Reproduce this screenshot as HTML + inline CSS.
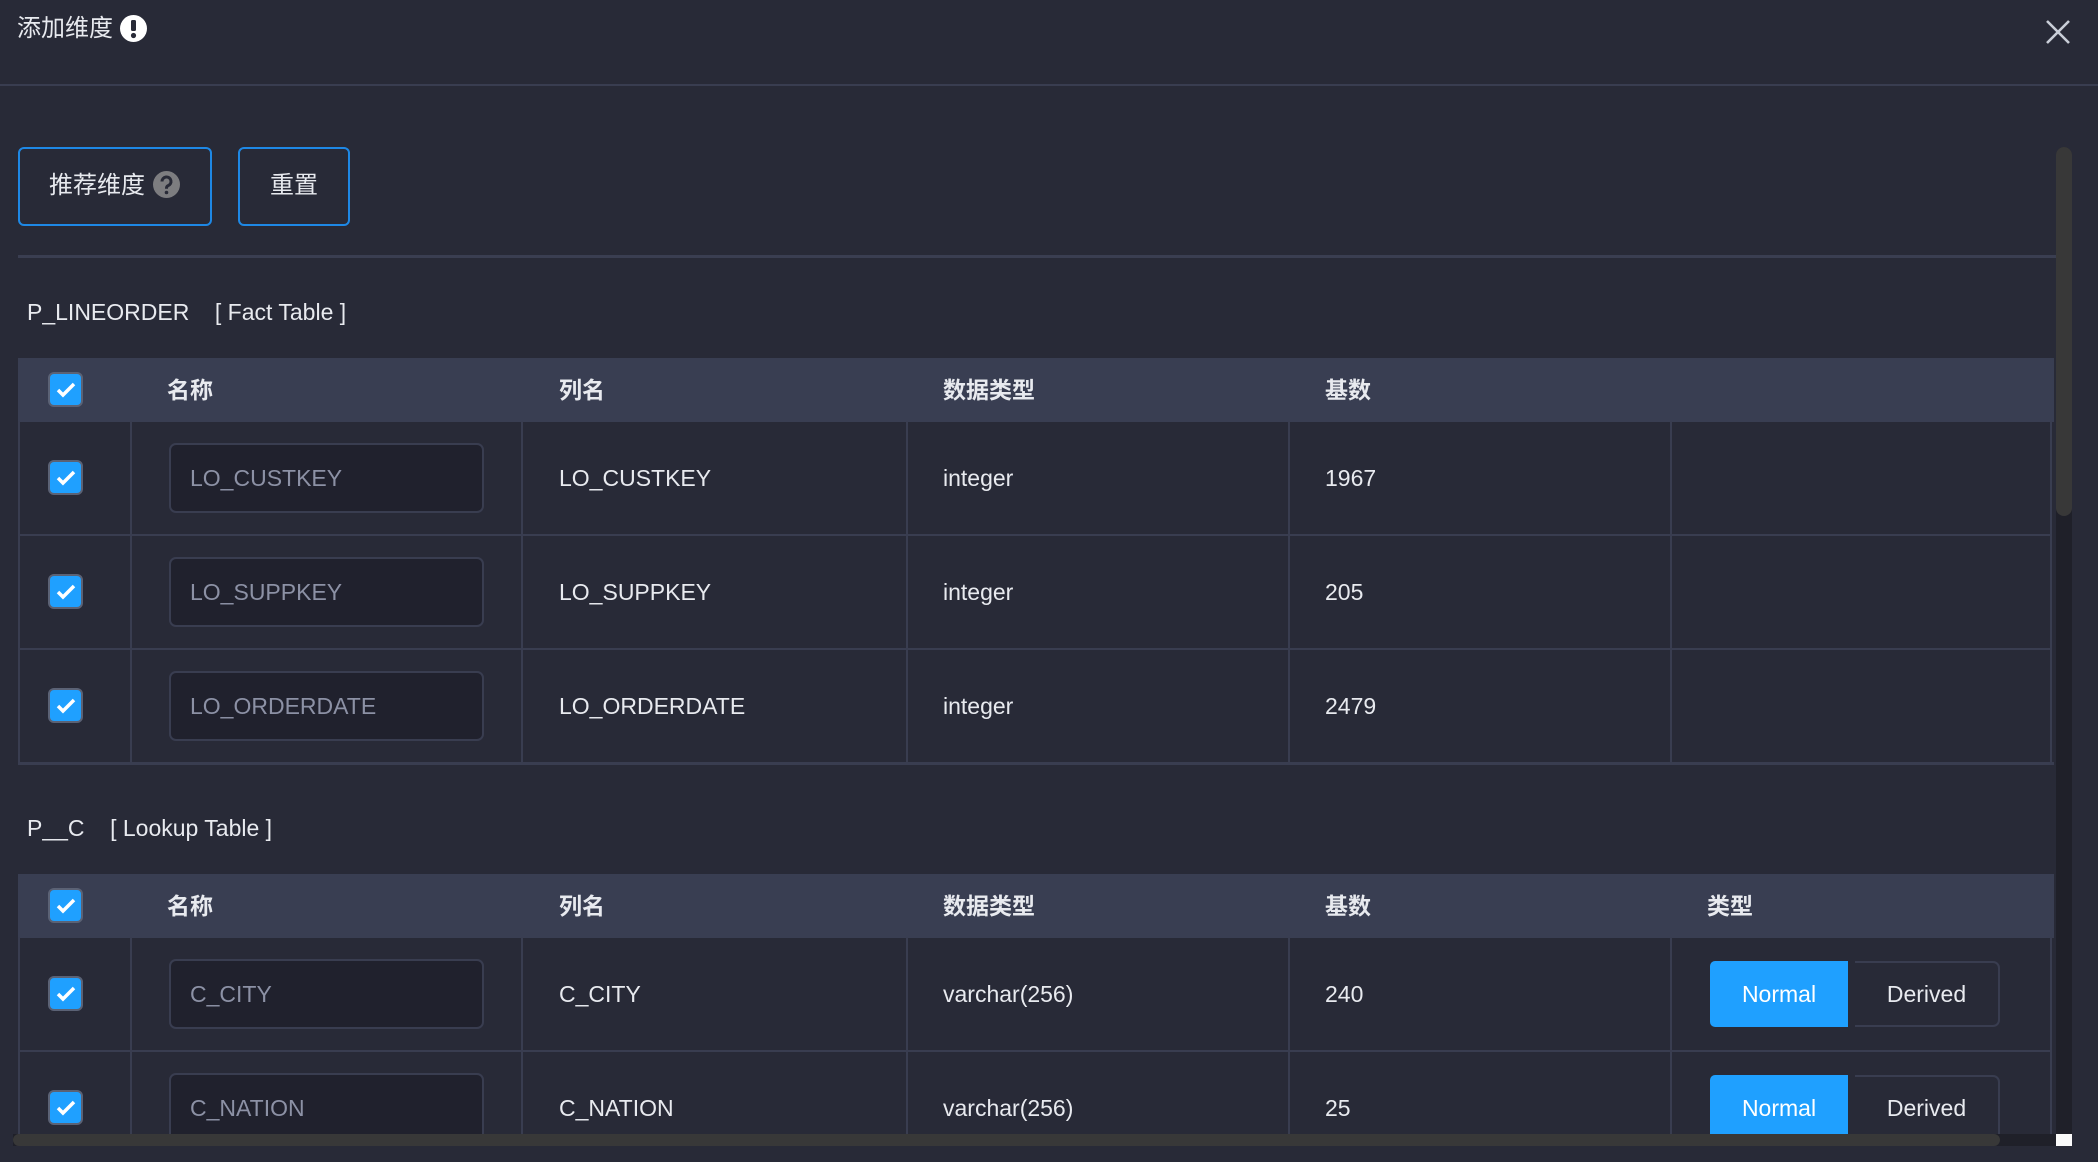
<!DOCTYPE html>
<html><head><meta charset="utf-8"><style>
*{margin:0;padding:0;box-sizing:border-box}
body{width:2098px;height:1162px;background:#282a37;position:relative;overflow:hidden;font-family:"Liberation Sans","Noto Sans CJK SC",sans-serif;color:#e8eaef}
.a{position:absolute}
.t{position:absolute;font-size:23px;line-height:30px;white-space:nowrap}
.hl{position:absolute;height:2px;background:#393d50}
.vl{position:absolute;width:2px;background:#393d50}
.cb{position:absolute;width:35px;height:35px;border-radius:6px;background:#1fa0ff;border:2px solid #5b6275}
.cb svg{position:absolute;left:5px;top:6px}
.inp{position:absolute;left:169px;width:315px;height:70px;border:2px solid #393d50;border-radius:7px;background:#20212d;color:#8c91a5;font-size:23px;line-height:66px;padding-left:19px}
.th{font-weight:bold}
.seg{position:absolute;left:1710px;width:290px;height:66px}
.nor{position:absolute;left:0;top:0;width:138px;height:66px;background:#1fa0ff;border-radius:5px 0 0 5px;color:#fff;font-size:23px;text-align:center;line-height:66px}
.der{position:absolute;left:145px;top:0;width:145px;height:66px;border:2px solid #393d50;border-left:none;border-radius:0 7px 7px 0;font-size:23px;text-align:center;line-height:62px}
</style></head><body>
<div class="t" style="left:17px;top:14px;font-size:24px">添加维度</div>
<svg class="a" style="left:120px;top:15px" width="27" height="27" viewBox="0 0 27 27"><circle cx="13.5" cy="13.5" r="13.5" fill="#fff"/><rect x="11" y="5" width="5" height="11" rx="1.5" fill="#282a37"/><circle cx="13.5" cy="20.5" r="2.6" fill="#282a37"/></svg>
<svg class="a" style="left:2045px;top:19px" width="26" height="26" viewBox="0 0 26 26"><path d="M2 2L24 24M24 2L2 24" stroke="#c9ced8" stroke-width="2.6"/></svg>
<div class="hl" style="left:0;top:84px;width:2098px"></div>

<div class="a" style="left:18px;top:147px;width:194px;height:79px;border:2px solid #1e88e5;border-radius:6px"></div>
<div class="t" style="left:49px;top:171px;font-size:24px">推荐维度</div>
<svg class="a" style="left:153px;top:171px" width="27" height="27" viewBox="0 0 27 27"><circle cx="13.5" cy="13.5" r="13.5" fill="#7d7d80"/><path d="M9 10.5a4.5 4.5 0 1 1 6 4.2c-1 .5-1.5 1.2-1.5 2.5v.6" stroke="#282a37" stroke-width="3" fill="none"/><circle cx="13.5" cy="21.5" r="1.8" fill="#282a37"/></svg>
<div class="a" style="left:238px;top:147px;width:112px;height:79px;border:2px solid #1e88e5;border-radius:6px"></div>
<div class="t" style="left:270px;top:171px;font-size:24px">重置</div>
<div class="hl" style="left:18px;top:255px;width:2038px;height:3px;background:#3a3e51"></div>

<div class="t" style="left:27px;top:297px;font-size:23px">P_LINEORDER&nbsp;&nbsp;&nbsp;&nbsp;[ Fact Table ]</div>
<!-- table 1 -->
<div class="a" style="left:18px;top:358px;width:2036px;height:64px;background:#393e52"></div>
<div class="cb" style="left:48px;top:372px"><svg width="22" height="20" viewBox="0 0 22 20"><path d="M3 10l5 5 11-11" stroke="#fff" stroke-width="3.5" fill="none"/></svg></div>
<div class="t th" style="left:167px;top:375px">名称</div>
<div class="t th" style="left:559px;top:375px">列名</div>
<div class="t th" style="left:943px;top:375px">数据类型</div>
<div class="t th" style="left:1325px;top:375px">基数</div>
<div class="vl" style="left:18px;top:421px;height:344px"></div>
<div class="vl" style="left:130px;top:421px;height:344px"></div>
<div class="vl" style="left:521px;top:421px;height:344px"></div>
<div class="vl" style="left:906px;top:421px;height:344px"></div>
<div class="vl" style="left:1288px;top:421px;height:344px"></div>
<div class="vl" style="left:1670px;top:421px;height:344px"></div>
<div class="vl" style="left:2050px;top:421px;height:344px"></div>
<div class="hl" style="left:18px;top:534px;width:2034px"></div>
<div class="hl" style="left:18px;top:648px;width:2034px"></div>
<div class="hl" style="left:18px;top:762px;width:2036px;height:3px"></div>

<div class="cb" style="left:48px;top:460px"><svg width="22" height="20" viewBox="0 0 22 20"><path d="M3 10l5 5 11-11" stroke="#fff" stroke-width="3.5" fill="none"/></svg></div>
<div class="inp" style="top:443px">LO_CUSTKEY</div>
<div class="t" style="left:559px;top:463px">LO_CUSTKEY</div>
<div class="t" style="left:943px;top:463px">integer</div>
<div class="t" style="left:1325px;top:463px">1967</div>

<div class="cb" style="left:48px;top:574px"><svg width="22" height="20" viewBox="0 0 22 20"><path d="M3 10l5 5 11-11" stroke="#fff" stroke-width="3.5" fill="none"/></svg></div>
<div class="inp" style="top:557px">LO_SUPPKEY</div>
<div class="t" style="left:559px;top:577px">LO_SUPPKEY</div>
<div class="t" style="left:943px;top:577px">integer</div>
<div class="t" style="left:1325px;top:577px">205</div>

<div class="cb" style="left:48px;top:688px"><svg width="22" height="20" viewBox="0 0 22 20"><path d="M3 10l5 5 11-11" stroke="#fff" stroke-width="3.5" fill="none"/></svg></div>
<div class="inp" style="top:671px">LO_ORDERDATE</div>
<div class="t" style="left:559px;top:691px">LO_ORDERDATE</div>
<div class="t" style="left:943px;top:691px">integer</div>
<div class="t" style="left:1325px;top:691px">2479</div>

<div class="t" style="left:27px;top:813px;font-size:23px">P__C&nbsp;&nbsp;&nbsp;&nbsp;[ Lookup Table ]</div>
<!-- table 2 -->
<div class="a" style="left:18px;top:874px;width:2036px;height:64px;background:#393e52"></div>
<div class="cb" style="left:48px;top:888px"><svg width="22" height="20" viewBox="0 0 22 20"><path d="M3 10l5 5 11-11" stroke="#fff" stroke-width="3.5" fill="none"/></svg></div>
<div class="t th" style="left:167px;top:891px">名称</div>
<div class="t th" style="left:559px;top:891px">列名</div>
<div class="t th" style="left:943px;top:891px">数据类型</div>
<div class="t th" style="left:1325px;top:891px">基数</div>
<div class="t th" style="left:1707px;top:891px">类型</div>
<div class="vl" style="left:18px;top:937px;height:200px"></div>
<div class="vl" style="left:130px;top:937px;height:200px"></div>
<div class="vl" style="left:521px;top:937px;height:200px"></div>
<div class="vl" style="left:906px;top:937px;height:200px"></div>
<div class="vl" style="left:1288px;top:937px;height:200px"></div>
<div class="vl" style="left:1670px;top:937px;height:200px"></div>
<div class="vl" style="left:2050px;top:937px;height:200px"></div>
<div class="hl" style="left:18px;top:1050px;width:2034px"></div>

<div class="cb" style="left:48px;top:976px"><svg width="22" height="20" viewBox="0 0 22 20"><path d="M3 10l5 5 11-11" stroke="#fff" stroke-width="3.5" fill="none"/></svg></div>
<div class="inp" style="top:959px">C_CITY</div>
<div class="t" style="left:559px;top:979px">C_CITY</div>
<div class="t" style="left:943px;top:979px">varchar(256)</div>
<div class="t" style="left:1325px;top:979px">240</div>
<div class="seg" style="top:961px"><div class="nor">Normal</div><div class="der">Derived</div></div>

<div class="cb" style="left:48px;top:1090px"><svg width="22" height="20" viewBox="0 0 22 20"><path d="M3 10l5 5 11-11" stroke="#fff" stroke-width="3.5" fill="none"/></svg></div>
<div class="inp" style="top:1073px;height:64px;border-bottom:none;border-radius:7px 7px 0 0">C_NATION</div>
<div class="t" style="left:559px;top:1093px">C_NATION</div>
<div class="t" style="left:943px;top:1093px">varchar(256)</div>
<div class="t" style="left:1325px;top:1093px">25</div>
<div class="seg" style="top:1075px;height:60px;overflow:hidden"><div class="nor">Normal</div><div class="der">Derived</div></div>

<!-- scrollbars -->
<div class="a" style="left:2056px;top:147px;width:16px;height:987px;background:#1f2029;border-radius:8px 8px 0 0"></div>
<div class="a" style="left:2056px;top:147px;width:16px;height:369px;background:#383838;border-radius:8px"></div>
<div class="a" style="left:13px;top:1134px;width:2043px;height:12px;background:#1f2029"></div>
<div class="a" style="left:13px;top:1134px;width:1987px;height:12px;background:#383838;border-radius:6px"></div>
<div class="a" style="left:2056px;top:1134px;width:16px;height:12px;background:#fafafa"></div>
</body></html>
